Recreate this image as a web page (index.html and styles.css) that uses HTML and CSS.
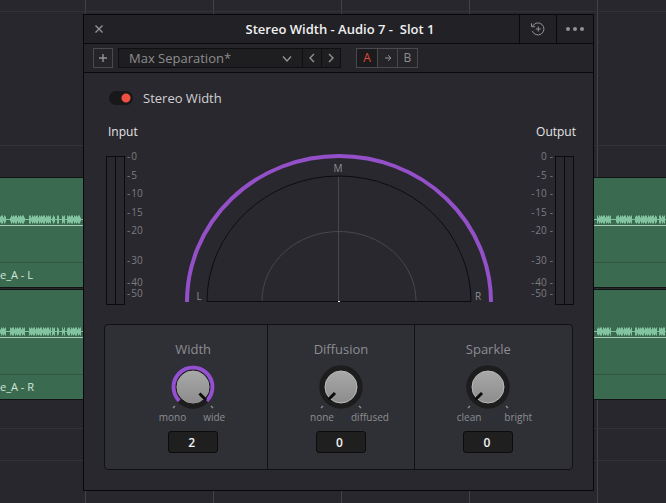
FILE: index.html
```html
<!DOCTYPE html>
<html lang="en">
<head>
<meta charset="utf-8">
<title>Stereo Width - Audio 7 - Slot 1</title>
<link rel="stylesheet" href="styles.css">
</head>
<body>
<main class="timeline">
  <section class="clip">
    <div class="wave"></div>
    <p class="clip-name">e_A - L</p>
  </section>
  <section class="clip">
    <div class="wave"></div>
    <p class="clip-name">e_A - R</p>
  </section>
</main>

<section class="plugin">
  <header class="titlebar">
    <button class="icon-btn close" aria-label="Close"><svg width="10" height="10" viewBox="0 0 10 10"><path d="M1.5 1.5l7 7M8.500 1.500l-7 7"/></svg></button>
    <h1>Stereo Width - Audio 7 -&nbsp; Slot 1</h1>
    <button class="icon-btn cell" aria-label="History"><svg class="history" width="16" height="16" viewBox="0 0 16 16"><path d="M2.600 5.200A6 6 0 1 1 2.300 10M1.500 2.300v3.400h3.600M8.300 5.500v5M5.800 8h5"/></svg></button>
    <button class="icon-btn cell" aria-label="Options"><svg class="dots" width="18" height="6" viewBox="0 0 18 6"><circle cx="2" cy="3" r="2"/><circle cx="9" cy="3" r="2"/><circle cx="16" cy="3" r="2"/></svg></button>
  </header>

  <div class="toolbar">
    <button class="icon-btn add" aria-label="Add preset"><svg width="10" height="10" viewBox="0 0 10 10"><path d="M5 1v8M1 5h8"/></svg></button>
    <div class="preset">
      <span class="select-wrap">
        <select aria-label="Preset"><option>Max Separation*</option></select>
        <svg class="chevron" width="10" height="8" viewBox="0 0 10 8"><path d="M1 1.500l4 4.500l4-4.500"/></svg>
      </span>
      <button class="icon-btn step" aria-label="Previous preset"><svg width="8" height="10" viewBox="0 0 8 10"><path d="M6 1L2 5l4 4"/></svg></button>
      <button class="icon-btn step" aria-label="Next preset"><svg width="8" height="10" viewBox="0 0 8 10"><path d="M2 1l4 4l-4 4"/></svg></button>
    </div>
    <div class="compare">
      <button class="active">A</button>
      <button class="icon-btn" aria-label="Copy A to B"><svg class="thin" width="8" height="8" viewBox="0 0 8 8"><path d="M1 4h6M4 1.200L7 4l-3 2.800"/></svg></button>
      <button>B</button>
    </div>
  </div>

  <div class="content">
    <label class="enable"><input type="checkbox" checked><span>Stereo Width</span></label>

    <div class="scope">
      <div class="meter">
        <h2>Input</h2>
        <div class="meter-body">
          <div class="bars"><i></i><i></i></div>
          <ul class="scale"><li>0</li><li>5</li><li>10</li><li>15</li><li>20</li><li>30</li><li>40</li><li>50</li></ul>
        </div>
      </div>
      <svg class="field" width="308" height="150" viewBox="0 0 308 150">
        <path class="reach" d="M2 148A152 146 0 0 1 306 148"/>
        <path class="edge" d="M22 147.500A132 125.500 0 0 1 286 147.500Z"/>
        <path class="inner" d="M77 147A77 69.500 0 0 1 231 147M153.500 23v124"/>
        <rect class="origin" x="153" y="147" width="2" height="1"/>
        <text x="153" y="18">M</text><text x="14" y="146">L</text><text x="293" y="146">R</text>
      </svg>
      <div class="meter output">
        <h2>Output</h2>
        <div class="meter-body">
          <ul class="scale"><li>0</li><li>5</li><li>10</li><li>15</li><li>20</li><li>30</li><li>40</li><li>50</li></ul>
          <div class="bars"><i></i><i></i></div>
        </div>
      </div>
    </div>

    <div class="knobs">
      <div class="knob">
        <label for="width">Width</label>
        <svg class="dial" width="46" height="46" viewBox="0 0 46 46">
          <defs><linearGradient id="face" x1="0" y1="0" x2="0" y2="1"><stop offset="0" stop-color="#a8a8a8"/><stop offset="1" stop-color="#8c8c8c"/></linearGradient></defs>
          <circle class="well" cx="23" cy="23" r="21"/>
          <path class="travel" d="M9.200 36.800A19.500 19.500 0 1 1 36.800 36.800"/>
          <circle class="cap" cx="23" cy="23" r="16"/>
          <path class="pointer" d="M29.500 29.500L36 36"/>
          <path class="tick" d="M3 44l2-2M43 44l-2-2"/>
        </svg>
        <div class="ends"><span>mono</span><span>wide</span></div>
        <input id="width" type="text" value="2">
      </div>
      <div class="knob">
        <label for="diffusion">Diffusion</label>
        <svg class="dial" width="46" height="46" viewBox="0 0 46 46">
          <circle class="well" cx="23" cy="23" r="21"/>
          <circle class="cap" cx="23" cy="23" r="16"/>
          <path class="pointer" d="M17 29L10.500 35.500"/>
          <path class="tick" d="M3 44l2-2M43 44l-2-2"/>
        </svg>
        <div class="ends"><span>none</span><span>diffused</span></div>
        <input id="diffusion" type="text" value="0">
      </div>
      <div class="knob">
        <label for="sparkle">Sparkle</label>
        <svg class="dial" width="46" height="46" viewBox="0 0 46 46">
          <circle class="well" cx="23" cy="23" r="21"/>
          <circle class="cap" cx="23" cy="23" r="16"/>
          <path class="pointer" d="M17 29L10.500 35.500"/>
          <path class="tick" d="M3 44l2-2M43 44l-2-2"/>
        </svg>
        <div class="ends spread"><span>clean</span><span>bright</span></div>
        <input id="sparkle" type="text" value="0">
      </div>
    </div>
  </div>
</section>
<script src="wave.js"></script>
</body>
</html>
```
FILE: wave.js
```js
// Draws each clip's waveform as phrases of short bursts along its centre line.
const phrases = [
  [0, 6], [10, 25], [29, 51], [52, 55], [57, 59], [62, 65], [67, 81],
  [97, 110], [114, 132], [160, 190], [210, 260], [290, 330], [360, 400],
  [430, 470], [500, 540], [560, 585], [597, 611], [616, 632], [635, 657],
  [659, 665]
];
const heights = [3, 4, 4, 2, 4, 3, 4];
document.querySelectorAll(".wave").forEach((wave, row) => {
  let d = "";
  phrases.forEach(([start, end]) => {
    for (let x = start; x < end; x += 1) {
      const h = heights[(x + row * 3) % heights.length];
      d += `M${x + 0.5} ${6.5 - h}v${h * 2}`;
    }
  });
  wave.innerHTML =
    `<svg width="100%" height="12"><path class="axis" d="M0 6.500H4000"/><path class="burst" d="${d}"/></svg>`;
});
```
FILE: styles.css
```css
* { box-sizing: border-box; }

body {
  position: relative;
  margin: 0;
  min-height: 100vh;
  background: #28272d;
  color: #8d8d90;
  font-family: "Open Sans", "Noto Sans", sans-serif;
  font-size: 13px;
}

h1, h2, p, ul { margin: 0; padding: 0; }
ul { list-style: none; }

button, input, select {
  margin: 0;
  padding: 0;
  border: 0;
  background: none;
  color: inherit;
  font: inherit;
}

svg { display: block; fill: none; stroke: #929295; stroke-width: 1.4; }

/* Timeline behind the plugin window */
.timeline {
  min-height: 100vh;
  padding-top: 177px;
  overflow: hidden;
  background:
    linear-gradient(#333238, #333238) 0 11px / 100% 1px no-repeat,
    linear-gradient(#333238, #333238) 0 145px / 100% 1px no-repeat,
    linear-gradient(#333238, #333238) 0 428px / 100% 1px no-repeat,
    linear-gradient(#333238, #333238) 0 460px / 100% 1px no-repeat,
    linear-gradient(to right, #424147 1px, transparent 1px) 85px 0 / 128px 100%;
}

.clip {
  height: 111px;
  margin-bottom: 1px;
  padding-top: 35px;
  border: solid #111412;
  border-width: 1px 0;
  background: #3a6a4f;
}

.wave { height: 13px; border-bottom: 1px solid #a9cdb7; }
.wave .axis { stroke: #82c3a0; stroke-width: 1; }
.wave .burst { stroke: #82c3a0; stroke-width: 1; }

.clip-name {
  margin-top: 36px;
  border-top: 1px solid #31583f;
  color: #d5e4da;
  font-size: 11px;
  line-height: 24px;
}

/* Plugin window */
.plugin {
  position: absolute;
  top: 14px;
  left: 83px;
  right: 72px;
  border: 1px solid #08080a;
  background: #29282e;
}

.titlebar, .toolbar {
  display: flex;
  align-items: center;
  height: 29px;
  border-bottom: 1px solid #0a0a0c;
  background: #222126;
}

.toolbar { background: #252429; padding-left: 9px; gap: 5px; }

.icon-btn { display: flex; align-items: center; justify-content: center; }
.close { width: 30px; height: 28px; margin-right: 47px; }
.cell { width: 37px; height: 28px; border-left: 1px solid #0a0a0c; }
.dots { fill: #929295; stroke: none; }
.thin, .history { stroke-width: 1; }

h1 {
  flex: 1;
  color: #f0f0f0;
  font-size: 13px;
  font-weight: 600;
  text-align: center;
  white-space: nowrap;
}

.add { width: 20px; height: 20px; border: 1px solid #4a494f; }

.preset {
  display: flex;
  height: 20px;
  border: 1px solid #0f0f11;
  background: #1e1d1f;
}

.select-wrap { position: relative; width: 183px; }
.select-wrap select {
  display: block;
  appearance: none;
  width: 100%;
  height: 18px;
  padding-left: 10px;
  line-height: 18px;
}
.chevron { position: absolute; right: 10px; top: 6px; pointer-events: none; }
.step { width: 19px; border-left: 1px solid #0f0f11; }

.compare {
  display: flex;
  height: 20px;
  margin-left: 10px;
  border: 1px solid #4a494f;
}
.compare button { width: 20px; line-height: 18px; font-size: 12px; font-weight: 500; }
.compare button + button { border-left: 1px solid #4a494f; }
.compare .active { background: #1b1a1c; color: #e0493c; }

.content { padding: 18px 20px 20px; }

.enable {
  display: flex;
  align-items: center;
  gap: 10px;
  width: max-content;
  margin-left: 5px;
  color: #d0d0d2;
  line-height: 14px;
}
.enable input {
  appearance: none;
  width: 24px;
  height: 14px;
  border-radius: 7px;
  background: radial-gradient(circle at 17px 7px, #ee5041 4px, transparent 5px) #18171a;
}

/* Meters and stereo field */
.scope { display: flex; justify-content: space-between; margin: 19px 0 19px 2px; }

.meter { width: 50px; }
.meter h2 {
  padding-left: 2px;
  color: #e4e4e6;
  font-size: 12px;
  font-weight: 400;
  line-height: 16px;
}
.meter.output { margin-right: -1px; }
.meter.output h2 { margin-right: -2px; padding: 0; text-align: right; }

.meter-body { display: flex; gap: 2px; margin-top: 16px; }
.output .meter-body { justify-content: flex-end; }

.bars { display: flex; height: 149px; border: 1px solid #0b0b0d; }
.bars i { width: 8px; }
.bars i + i { width: 9px; border-left: 1px solid #0b0b0d; }

.scale {
  display: grid;
  grid-template-rows: 19px 18px 19px 18px 30px 22px 11px 11px;
  color: #7c7c80;
  font-size: 10px;
  line-height: 1px;
}
.scale li::before { content: "-"; margin-right: 1px; }
.output .scale { text-align: right; }
.output .scale li::after { content: "-"; margin-left: 3px; }
.output .scale li:first-child::before { content: none; }

.field { margin: 30px 3px 0 0; }
.reach { stroke: #9350c8; stroke-width: 4; }
.edge { stroke: #0d0d10; stroke-width: 1; }
.inner { stroke: #48474d; stroke-width: 1; }
.origin { fill: #ffffff; stroke: none; }
.field text { fill: #8d8d90; stroke: none; font-size: 10px; text-anchor: middle; }

/* Knob panel */
.knobs {
  display: grid;
  grid-template-columns: 163fr 147fr 159fr;
  border: 1px solid #111114;
  border-radius: 4px;
  background: #2f3036;
}
.knob {
  display: flex;
  flex-direction: column;
  align-items: center;
  padding: 15px 0 16px;
}
.knob + .knob { border-left: 1px solid #111114; }
.knob:first-child { padding-left: 14px; }
.knob:last-child { padding-right: 10px; }
.knob label { line-height: 18px; }

.dial { margin-top: 6px; }
.well { fill: #1d1d1e; stroke: #1d1d1e; }
.travel { stroke: #9350d0; stroke-width: 4; }
.cap { fill: url(#face); stroke: #b9b9b9; stroke-width: 1; }
.travel + .cap { paint-order: stroke; }
.pointer { stroke: #0b0b0b; stroke-width: 3; }
.tick { stroke: #8d8d90; }

.ends {
  display: grid;
  grid-template-columns: 1fr 1fr;
  gap: 17px;
  width: 100%;
  padding-left: 3px;
  font-size: 10px;
  line-height: 14px;
}
.ends span:first-child { text-align: right; }
.spread span:last-child { padding-left: 6px; }

.knob input {
  width: 50px;
  height: 22px;
  margin-top: 7px;
  padding-right: 3px;
  border: 1px solid #0c0c0d;
  border-radius: 3px;
  background: #1f1f20;
  color: #f2f2f2;
  font-size: 12px;
  font-weight: 600;
  text-align: center;
}
```
